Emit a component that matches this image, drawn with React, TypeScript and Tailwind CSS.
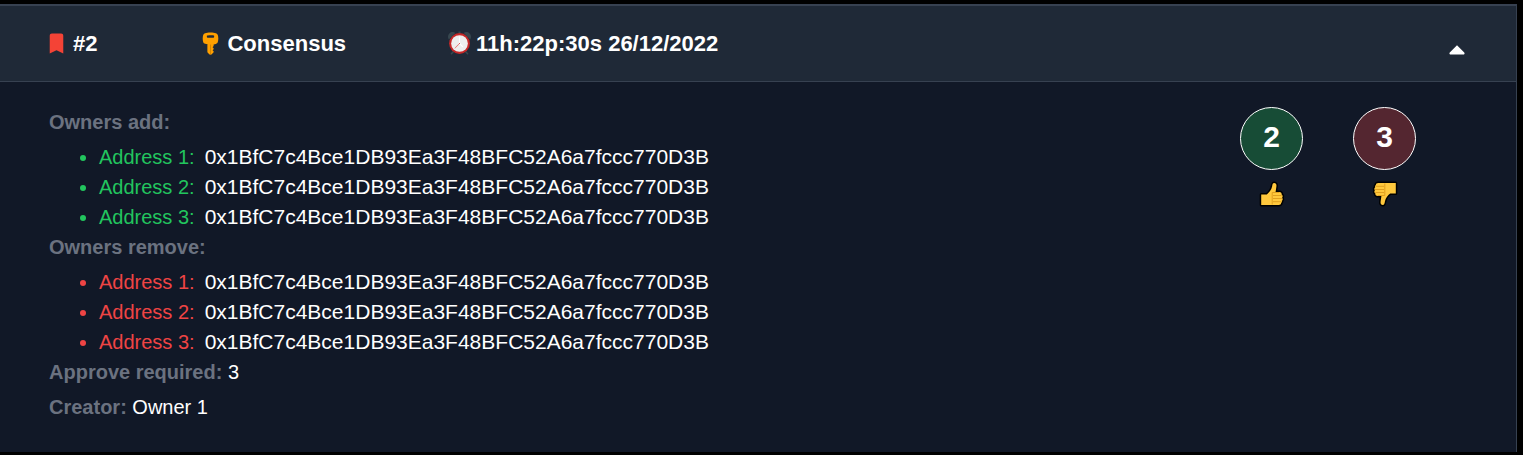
import { FcAlarmClock, FcBookmark, FcKey } from "react-icons/fc";
import { TiArrowSortedUp } from "react-icons/ti";
import { useState } from "react";
import type { ReactNode } from "react";

const ADDRESS = "0x1BfC7c4Bce1DB93Ea3F48BFC52A6a7fccc770D3B";
const addresses = [ADDRESS, ADDRESS, ADDRESS];

function HeaderItem({ icon, children }: { icon: ReactNode; children: ReactNode }) {
  return (
    <div className="flex items-center gap-1 text-[22px] font-bold whitespace-nowrap">
      {icon}
      <span>{children}</span>
    </div>
  );
}

function AddressList({ items, tone }: { items: string[]; tone: "add" | "remove" }) {
  return (
    <ul className={`mt-[5px] list-disc pl-[50px] ${tone === "add" ? "text-[#22c55e]" : "text-[#ef4444]"}`}>
      {items.map((address, index) => (
        <li key={index}>
          <span className="mr-[10px]">Address {index + 1}:</span>
          <span className="text-[21px] text-white">{address}</span>
        </li>
      ))}
    </ul>
  );
}

function Thumb({ down = false }: { down?: boolean }) {
  return (
    <svg viewBox="0 0 26 26" className="size-[26px]" aria-hidden="true">
      <g transform={down ? "rotate(180 13 13)" : undefined}>
        <path
          d="M2.2 13.4h5.6c2.6-1.8 4.6-4.6 5.3-8 .3-2.2.8-3.4 2-3.4 1.9 0 2.6 1.4 2.3 3.4L16.6 11h3.6c1.8 0 2.7 1.1 2.4 2.5 1.2.8 1.4 2.1.5 3.2.9 1 .8 2.4-.3 3.1.3 1 .1 1.6-.7 2.1.1 1.4-.8 2.1-2.4 2.1H2.2z"
          fill="#ffc83d"
          stroke="#000"
          strokeWidth="3"
          strokeLinejoin="round"
          paintOrder="stroke"
        />
        <path
          d="M13.2 11.5v12M13.2 11.5h7M14 14.5h8.6M14 17.5h9M14 20.7h8.2"
          fill="none"
          stroke="#e09f1f"
          strokeWidth="1"
        />
      </g>
    </svg>
  );
}

function Vote({ count, color, children }: { count: number; color: string; children: ReactNode }) {
  return (
    <div className="flex flex-col items-center gap-[11px]">
      <div className={`flex size-[63px] items-center justify-center rounded-full border border-white pb-[3px] text-[30px] font-bold ${color}`}>
        {count}
      </div>
      {children}
    </div>
  );
}

export default function App() {
  const [open, setOpen] = useState(true);

  return (
    <main className="min-h-screen bg-black pt-1 pr-[6px] font-['Liberation_Sans',Arial,sans-serif] text-[20px] leading-[30px] text-white">
      <article className="border-t-2 border-r border-[#374151] bg-[#111827]">
        <header className="flex items-center border-b border-[#374151] bg-[#1f2937] py-4 pr-[45px] pl-11">
          <div className="flex flex-1 gap-[101px]">
            <HeaderItem icon={<FcBookmark className="size-[25px]" />}>#2</HeaderItem>
            <HeaderItem icon={<FcKey className="size-[25px]" />}>Consensus</HeaderItem>
            <HeaderItem icon={<FcAlarmClock className="size-[25px]" />}>11h:22p:30s 26/12/2022</HeaderItem>
          </div>
          <button
            type="button"
            aria-label="Toggle details"
            aria-expanded={open}
            onClick={() => setOpen(!open)}
            className="pt-[15px]"
          >
            <TiArrowSortedUp className="size-7" />
          </button>
        </header>
        {open && (
          <div className="flex justify-between pt-[25px] pr-[100px] pb-[30px] pl-[49px]">
            <div>
              <h2 className="font-bold text-[#6b7280]">Owners add:</h2>
              <AddressList items={addresses} tone="add" />
              <h2 className="font-bold text-[#6b7280]">Owners remove:</h2>
              <AddressList items={addresses} tone="remove" />
              <p>
                <span className="font-bold text-[#6b7280]">Approve required:</span> 3
              </p>
              <p className="mt-[5px]">
                <span className="font-bold text-[#6b7280]">Creator:</span> Owner 1
              </p>
            </div>
            <div className="flex gap-[50px]">
              <Vote count={2} color="bg-[#174c36]">
                <Thumb />
              </Vote>
              <Vote count={3} color="bg-[#542630]">
                <Thumb down />
              </Vote>
            </div>
          </div>
        )}
      </article>
    </main>
  );
}
